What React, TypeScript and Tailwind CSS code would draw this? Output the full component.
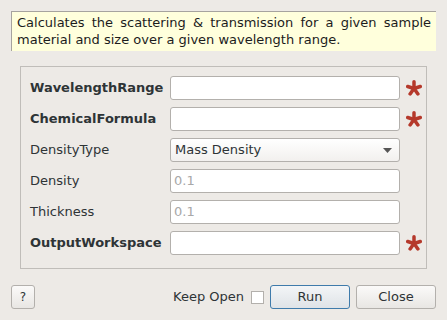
import type { ReactNode } from "react";

const FONT = "font-['DejaVu_Sans',sans-serif]";

function RequiredMark() {
  return (
    <svg width="16" height="16" viewBox="0 0 16 16" className="shrink-0">
      <g stroke="#b5392b" strokeWidth="3.5" strokeLinecap="round">
        <line x1="8" y1="8.5" x2="8" y2="1.8" />
        <line x1="8" y1="8.5" x2="14.3" y2="6.5" />
        <line x1="8" y1="8.5" x2="1.7" y2="6.5" />
        <line x1="8" y1="8.5" x2="11.9" y2="13.9" />
        <line x1="8" y1="8.5" x2="4.1" y2="13.9" />
      </g>
    </svg>
  );
}

type RowProps = {
  label: string;
  bold?: boolean;
  required?: boolean;
  children: ReactNode;
};

function Row({ label, bold, required, children }: RowProps) {
  return (
    <div className="flex h-[24px] items-center">
      <div
        className={`w-[140px] shrink-0 text-[13px] text-[#2e3436] ${bold ? "font-bold" : ""}`}
      >
        {label}
      </div>
      <div className="w-[230px] shrink-0">{children}</div>
      <div className="ml-[6px] flex w-[16px] items-center">
        {required ? <RequiredMark /> : null}
      </div>
    </div>
  );
}

function TextBox({ placeholder }: { placeholder?: string }) {
  return (
    <div className="flex h-[24px] items-center rounded-[3px] border border-[#b3b0ac] bg-white px-[3px] text-[13px] text-[#a8a8a8]">
      {placeholder}
    </div>
  );
}

function Select({ value }: { value: string }) {
  return (
    <div className="flex h-[24px] items-center justify-between rounded-[3px] border border-[#b3b0ac] bg-gradient-to-b from-white to-[#f2f0ee] pl-[4px] pr-[7px] text-[13px] text-[#2e3436]">
      <span>{value}</span>
      <svg width="9" height="5" viewBox="0 0 9 5">
        <path d="M0 0 H9 L4.5 5 Z" fill="#555" />
      </svg>
    </div>
  );
}

export default function App() {
  return (
    <div
      className={`${FONT} flex h-[320px] w-[447px] flex-col bg-[#edeae6] text-[#2e3436]`}
    >
      <div className="mx-[11px] mt-[11px] h-[40px] w-[425px] border-l border-t border-[#a6a39f] bg-[#ffffdc] px-[5px] pt-[2px] text-justify text-[13px] leading-[17px] text-[#1c1c1c] [text-align-last:left]">
        Calculates the scattering &amp; transmission for a given sample
        material and size over a given wavelength range.
      </div>

      <div className="ml-[20px] mt-[15px] flex h-[203px] w-[407px] flex-col gap-[7px] border border-[#c0bdb9] pl-[9px] pt-[9px]">
        <Row label="WavelengthRange" bold required>
          <TextBox />
        </Row>
        <Row label="ChemicalFormula" bold required>
          <TextBox />
        </Row>
        <Row label="DensityType">
          <Select value="Mass Density" />
        </Row>
        <Row label="Density">
          <TextBox placeholder="0.1" />
        </Row>
        <Row label="Thickness">
          <TextBox placeholder="0.1" />
        </Row>
        <Row label="OutputWorkspace" bold required>
          <TextBox />
        </Row>
      </div>

      <div className="mx-[11px] mt-[16px] flex h-[24px] items-center text-[13px]">
        <button
          type="button"
          className="flex h-[24px] w-[24px] items-center justify-center rounded-[3px] border border-[#b3b0ac] bg-gradient-to-b from-[#fbfaf9] to-[#e8e6e3] text-[12px] text-[#2e3436]"
        >
          ?
        </button>
        <div className="flex-1" />
        <span className="mr-[7px] text-[#2e3436]">Keep Open</span>
        <span className="h-[13px] w-[13px] border border-[#b3b0ac] bg-white" />
        <button
          type="button"
          className="ml-[6px] flex h-[24px] w-[80px] items-center justify-center rounded-[3px] border border-[#3f7bab] bg-gradient-to-b from-[#f3f5f7] to-[#dfe3e7] text-[13px] text-[#2e3436]"
        >
          Run
        </button>
        <button
          type="button"
          className="ml-[6px] flex h-[24px] w-[80px] items-center justify-center rounded-[3px] border border-[#b3b0ac] bg-gradient-to-b from-[#fbfaf9] to-[#e8e6e3] text-[13px] text-[#2e3436]"
        >
          Close
        </button>
      </div>
    </div>
  );
}
